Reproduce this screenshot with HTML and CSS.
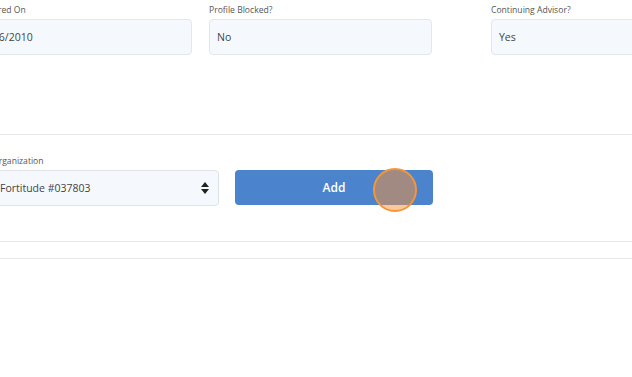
FILE: index.html
```html
<!DOCTYPE html>
<html lang="en">
<head>
  <meta charset="UTF-8" />
  <title>Advisor Profile</title>
  <link rel="stylesheet" href="styles.css">
</head>
<body>
  <div id="profile">
    <div class="field-row">
      <div class="field field-first">
        <label>Registered On</label>
        <div class="field-value">03/16/2010</div>
      </div>
      <div class="field">
        <label>Profile Blocked?</label>
        <div class="field-value">No</div>
      </div>
      <div class="field field-last">
        <label>Continuing Advisor?</label>
        <div class="field-value">Yes</div>
      </div>
    </div>

    <hr class="divider">

    <div class="org-row">
      <div class="field field-org">
        <label>Organization</label>
        <div class="select-box">
          <span>Fortitude #037803</span>
          <span class="select-arrows">
            <svg width="8" height="12" viewBox="0 0 8 12">
              <path d="M4 0 L8 5 L0 5 Z M0 7 L8 7 L4 12 Z" fill="#222"/>
            </svg>
          </span>
        </div>
      </div>
      <button class="add-btn">Add<span class="click-dot"></span></button>
    </div>

    <hr class="divider divider-lower">
    <hr class="divider divider-last">
  </div>
</body>
</html>
```

FILE: styles.css
```css
body {
  margin: 0;
  font-family: "Open Sans", "Noto Sans", Arial, sans-serif;
  background-color: #fff;
  color: #444;
  overflow: hidden;
}

#profile {
  margin-left: -31px;
  width: 760px;
}

.field-row {
  display: flex;
  padding-top: 4px;
}

.field {
  display: flex;
  flex-direction: column;
  flex-shrink: 0;
  width: 223px;
}

.field-first {
  margin-right: 17px;
}

.field-last {
  margin-left: 59px;
}

.field label {
  font-size: 8.6px;
  color: #555;
  line-height: 12px;
  height: 15px;
}

.field-value {
  box-sizing: border-box;
  height: 36px;
  padding: 0 7px;
  display: flex;
  align-items: center;
  font-size: 10.5px;
  color: #444;
  background-color: #f5f9fe;
  border: 1px solid #e2e7ee;
  border-radius: 4px;
}

.divider {
  border: none;
  border-top: 1px solid #e6e8eb;
  margin: 79px 0 0;
}

.org-row {
  display: flex;
  align-items: flex-end;
  margin-top: 20px;
  padding-left: 23px;
}

.field-org {
  width: 227px;
  margin-right: 16px;
}

.select-box {
  box-sizing: border-box;
  height: 36px;
  padding: 0 9px 0 7px;
  display: flex;
  align-items: center;
  justify-content: space-between;
  font-size: 10.5px;
  color: #444;
  background-color: #f5f9fe;
  border: 1px solid #dde3ea;
  border-radius: 4px;
}

.select-arrows {
  display: flex;
}

.add-btn {
  position: relative;
  flex-shrink: 0;
  width: 198px;
  height: 35px;
  margin-bottom: 1px;
  background-color: #4b83cd;
  color: #fff;
  font-family: inherit;
  font-size: 12px;
  font-weight: 600;
  border: none;
  border-radius: 4px;
}

.click-dot {
  position: absolute;
  left: 138px;
  top: -2px;
  width: 40px;
  height: 40px;
  border-radius: 50%;
  border: 2px solid #f3963a;
  background-color: rgba(246, 146, 56, 0.5);
}

.divider-lower {
  margin-top: 35px;
}

.divider-last {
  margin-top: 16px;
}
```
